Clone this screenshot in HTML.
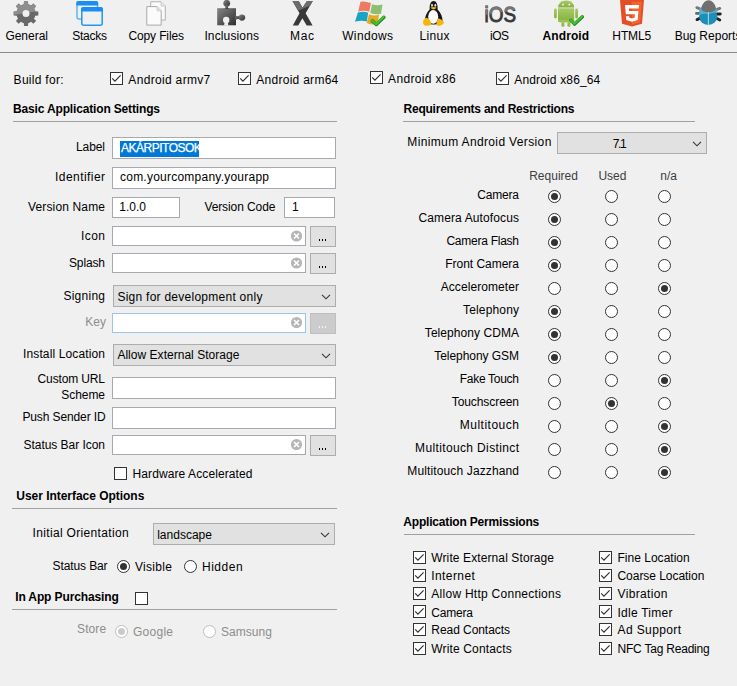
<!DOCTYPE html>
<html><head><meta charset="utf-8"><style>
html,body{margin:0;padding:0;}
body{width:737px;height:686px;background:#f0f0f0;position:relative;overflow:hidden;font-family:"Liberation Sans",sans-serif;font-size:12px;color:#000;}
.t{position:absolute;white-space:nowrap;line-height:14px;}
.b{font-weight:bold;}
.g{color:#8d8d8d;}
.h{color:#3c3c3c;}
.ab{position:absolute;}
.hr{position:absolute;height:1px;background:#a0a0a0;}
.inp{position:absolute;box-sizing:border-box;background:#fff;border:1px solid #a7a9b0;}
.sel{position:absolute;box-sizing:border-box;background:#e1e1e1;border:1px solid #adadad;}
.btn{position:absolute;box-sizing:border-box;background:#e1e1e1;border:1px solid #adadad;}
.cb{position:absolute;width:13px;height:13px;}
.rd{position:absolute;width:13px;height:13px;}
</style></head><body>
<svg class="ab" style="left:0;top:0" width="737" height="30" viewBox="0 0 737 30">
<defs>
 <clipPath id="gtop"><polygon points="0,0 60,0 60,7.5 0,17"/></clipPath>
 <linearGradient id="pz" x1="0" y1="0" x2="1" y2="1"><stop offset="0" stop-color="#858585"/><stop offset="1" stop-color="#2e2e2e"/></linearGradient>
 <clipPath id="xtop"><polygon points="280,0 320,0 320,1.5 298,10.8 280,10.8"/></clipPath>
 <linearGradient id="ios" x1="0" y1="0" x2="0.35" y2="1"><stop offset="0.45" stop-color="#6f6f6f"/><stop offset="0.5" stop-color="#3a3a3a"/></linearGradient>
 <linearGradient id="andr" x1="0" y1="0" x2="0" y2="1"><stop offset="0" stop-color="#a9c96a"/><stop offset="1" stop-color="#86b43a"/></linearGradient>
</defs>
<!-- gear -->
<g transform="translate(26,13.6)" fill="#696969"><circle r="9.6"/><path d="M-2.3 -6.5L-2 -12.3H2L2.3 -6.5Z" transform="rotate(0)"/><path d="M-2.3 -6.5L-2 -12.3H2L2.3 -6.5Z" transform="rotate(45)"/><path d="M-2.3 -6.5L-2 -12.3H2L2.3 -6.5Z" transform="rotate(90)"/><path d="M-2.3 -6.5L-2 -12.3H2L2.3 -6.5Z" transform="rotate(135)"/><path d="M-2.3 -6.5L-2 -12.3H2L2.3 -6.5Z" transform="rotate(180)"/><path d="M-2.3 -6.5L-2 -12.3H2L2.3 -6.5Z" transform="rotate(225)"/><path d="M-2.3 -6.5L-2 -12.3H2L2.3 -6.5Z" transform="rotate(270)"/><path d="M-2.3 -6.5L-2 -12.3H2L2.3 -6.5Z" transform="rotate(315)"/></g>
<g clip-path="url(#gtop)"><g transform="translate(26,13.6)" fill="#8e8e8e"><circle r="9.6"/><path d="M-2.3 -6.5L-2 -12.3H2L2.3 -6.5Z" transform="rotate(0)"/><path d="M-2.3 -6.5L-2 -12.3H2L2.3 -6.5Z" transform="rotate(45)"/><path d="M-2.3 -6.5L-2 -12.3H2L2.3 -6.5Z" transform="rotate(90)"/><path d="M-2.3 -6.5L-2 -12.3H2L2.3 -6.5Z" transform="rotate(135)"/><path d="M-2.3 -6.5L-2 -12.3H2L2.3 -6.5Z" transform="rotate(180)"/><path d="M-2.3 -6.5L-2 -12.3H2L2.3 -6.5Z" transform="rotate(225)"/><path d="M-2.3 -6.5L-2 -12.3H2L2.3 -6.5Z" transform="rotate(270)"/><path d="M-2.3 -6.5L-2 -12.3H2L2.3 -6.5Z" transform="rotate(315)"/></g></g>
<circle cx="26" cy="13.5" r="3.5" fill="#f0f0f0"/>
<!-- stacks -->
<rect x="77" y="1.7" width="20.5" height="17.3" rx="2" fill="none" stroke="#62b2f2" stroke-width="1.5"/>
<path d="M76.3 5.5V3a2 2 0 0 1 2-2H96.2a2 2 0 0 1 2 2V5.5Z" fill="#1a8ef2"/>
<rect x="81.8" y="7.9" width="20.4" height="17.3" rx="2" fill="#f0f0f0" stroke="#2196f3" stroke-width="1.5"/>
<path d="M81 11.6V9.1a2 2 0 0 1 2-2H101a2 2 0 0 1 2 2V11.6Z" fill="#1a8ef2"/>

<!-- copy files -->
<path d="M150.7 1.8H161L165.3 6.1V20.1H150.7Z" fill="#fafafa" stroke="#b0b0b0"/>
<path d="M161 1.8V6.1H165.3" fill="#e6e6e6" stroke="#c8c8c8" stroke-width="0.8"/>
<path d="M146.8 6.6H157L161.2 10.8V25.1H146.8Z" fill="#fbfbfb" stroke="#a9a9a9"/>
<path d="M157 6.6V10.8H161.2" fill="#e4e4e4" stroke="#c4c4c4" stroke-width="0.8"/>

<!-- puzzle -->
<g fill="url(#pz)">
 <rect x="217.2" y="8.2" width="18.8" height="17.1"/>
 <circle cx="226.7" cy="3.3" r="3.4"/>
 <path d="M224.6 9Q225.8 7.5 225.4 5.5H228Q227.6 7.5 228.8 9Z"/>
 <ellipse cx="241.9" cy="17.6" rx="3.3" ry="3.1"/>
 <path d="M235.5 15.3Q237 16.6 239 16.3V19Q237 18.7 235.5 20Z"/>
</g>
<circle cx="226.2" cy="20" r="3.2" fill="#f0f0f0"/>
<path d="M224.8 22H227.6L228.4 25.5H224Z" fill="#f0f0f0"/>
<!-- mac X -->
<polygon points="292.5,1 298.7,1 302.5,7.8 307,1 312.8,1 305.6,13.2 312.6,25.6 306.7,25.6 302.4,18.2 298.2,25.6 292.8,25.6 299.5,13.2" fill="#393939"/>
<polygon clip-path="url(#xtop)" points="292.5,1 298.7,1 302.5,7.8 307,1 312.8,1 305.6,13.2 312.6,25.6 306.7,25.6 302.4,18.2 298.2,25.6 292.8,25.6 299.5,13.2" fill="#6c6c6c"/>

<!-- windows -->
<path d="M360.5 1.8Q365 0.8 370.9 3L369.3 11.8Q364 9.6 358.2 11.6Z" fill="#ec7a63"/>
<path d="M372 4.2Q377 6 382.5 4.6L381 13.8Q375.5 15.2 370.3 13Z" fill="#8bc16e"/>
<path d="M357.9 12.6Q363.4 10.6 368.2 12.8L366.8 21.6Q361.5 19.6 355 21.8Z" fill="#17a4c5"/>
<path d="M369 14.2Q374 16.3 379 14.8L377.6 23.8Q372.3 25.6 366.8 23Z" fill="#e9a824"/>
<path d="M372.3 20.8L376.3 24.5L383.9 17.2" fill="none" stroke="#2a7a20" stroke-width="3.4" stroke-linecap="round" stroke-linejoin="round"/>
<path d="M372.1 20.5L376.1 24.1L383.6 16.9" fill="none" stroke="#3cc52e" stroke-width="2.2" stroke-linecap="round" stroke-linejoin="round"/>

<!-- tux -->
<path d="M429.6 9.5Q429.3 1 433.6 1Q437.9 1 437.6 9.5Q442.6 14.5 442.6 21.5Q442 24.5 433.6 24.5Q425.2 24.5 424.8 21.5Q424.8 14.5 429.6 9.5Z" fill="#161616"/>
<ellipse cx="433.2" cy="16.8" rx="5" ry="6.9" fill="#fff"/>
<ellipse cx="432" cy="5.2" rx="1" ry="1.5" fill="#d8d8d8"/>
<ellipse cx="435.3" cy="5.2" rx="1" ry="1.5" fill="#d8d8d8"/>
<path d="M430.4 7.6Q433.5 6.3 436.6 7.6Q434.8 9.6 433.5 9.6Q432.2 9.6 430.4 7.6Z" fill="#f4b40f"/>
<path d="M423 22Q423.4 18.5 427 17.8Q430.8 20 431.5 24.3Q429.5 26.2 425.5 25.8Q422.8 24.8 423 22Z" fill="#f7b60d"/>
<path d="M436.4 24.6Q436.4 20 438.4 18.2Q442 19.3 444.2 22.5Q443 25.2 439 26Q436.6 26 436.4 24.6Z" fill="#f7b60d"/>
<!-- iOS -->
<clipPath id="iostop"><polygon points="480,0 520,0 520,9 480,16"/></clipPath>
<text x="484.6" y="21.7" font-family="Liberation Sans" font-size="22.8" fill="#383838" stroke="#383838" stroke-width="0.9" textLength="31.5" lengthAdjust="spacingAndGlyphs">iOS</text>
<text clip-path="url(#iostop)" x="484.6" y="21.7" font-family="Liberation Sans" font-size="22.8" fill="#777" stroke="#777" stroke-width="0.9" textLength="31.5" lengthAdjust="spacingAndGlyphs">iOS</text>
<!-- android -->
<g fill="url(#andr)">
 <path d="M558 7.4A8.1 7 0 0 1 574.2 7.4Z"/>
 <rect x="558" y="8.3" width="16.2" height="12.6" rx="0"/>
 <path d="M558 20.5H574.2V20.8Q574.2 22.2 572.8 22.2H559.4Q558 22.2 558 20.8Z"/>
 <rect x="554" y="8.6" width="2.8" height="9.9" rx="1.4"/>
 <rect x="575.2" y="8.6" width="2.8" height="9.9" rx="1.4"/>
 <rect x="561.4" y="21" width="3" height="5.8" rx="1.4"/>
 <rect x="567.4" y="21" width="3" height="5.8" rx="1.4"/>
</g>
<path d="M561 1L562.5 3.2M571.3 1L569.8 3.2" stroke="#a9c96a" stroke-width="0.8"/>
<circle cx="563.1" cy="4.6" r="0.9" fill="#fff"/>
<circle cx="569.3" cy="4.6" r="0.9" fill="#fff"/>
<path d="M570.8 20.4L574.6 24.1L582.4 16.8" fill="none" stroke="#2a7a20" stroke-width="3.4" stroke-linecap="round" stroke-linejoin="round"/>
<path d="M570.6 20.1L574.4 23.7L582.1 16.5" fill="none" stroke="#3cc52e" stroke-width="2.2" stroke-linecap="round" stroke-linejoin="round"/>

<!-- html5 -->
<path d="M620 0H644L642 23.8L632 26.6L622 23.8Z" fill="#e34f26"/>
<path d="M632 1.8H641.8L640.2 22.2L632 24.6Z" fill="#f06529"/>
<path d="M625 5H639L638.7 8.6H628.8L629 11H638.4L637.7 20L632 21.8L626.2 20L626 16.2H629.2L629.4 17.8L632 18.5L634.6 17.8L634.9 14.3H625.8Z" fill="#fff"/>

<!-- bug -->
<g stroke-width="2.8" stroke-linecap="round">
 <path d="M696.8 7.6L699.5 8.6" stroke="#777"/>
 <path d="M696.5 13.4H699.5" stroke="#666"/>
 <path d="M697 19.6L699.8 18.4" stroke="#222"/>
 <path d="M719.8 8.4L717 9.4" stroke="#777"/>
 <path d="M720.3 14H717.3" stroke="#222"/>
 <path d="M719.8 20L717 18.6" stroke="#222"/>
</g>
<ellipse cx="708.2" cy="16.6" rx="9.1" ry="8.5" fill="#1b8fb8"/>
<path d="M699.2 15.2Q703 13.2 708 14Q713 13.2 717.2 12V10A9 4 0 0 0 699.2 10Z" fill="#52b0d2"/>
<path d="M701.2 8Q703.5 0.2 708.6 0.2Q713.7 0.2 716 8Q716.4 9.6 714 11Q711 12.6 708.6 12.3Q706 12.6 703 11Q700.8 9.6 701.2 8Z" fill="#6f6f6f"/>
<rect x="707.9" y="12.3" width="0.8" height="12.8" fill="#d8eef5"/>
</svg>

<div class="hr" style="left:0;top:52px;width:737px;background:#8a8a8a"></div>
<div class="hr" style="left:13px;top:121px;width:324px"></div>
<div class="hr" style="left:403px;top:121px;width:292px"></div>
<div class="hr" style="left:12px;top:508px;width:325px"></div>
<div class="hr" style="left:12px;top:609px;width:325px"></div>
<div class="hr" style="left:404px;top:534px;width:291px"></div>
<svg class="cb" style="left:110px;top:72px" width="13" height="13" viewBox="0 0 13 13"><rect x="0.5" y="0.5" width="12" height="12" fill="#fff" stroke="#333"/><path d="M2.2 6.4L4.9 9.1L10.6 3.4" fill="none" stroke="#333" stroke-width="1.2"/></svg>
<svg class="cb" style="left:238px;top:72px" width="13" height="13" viewBox="0 0 13 13"><rect x="0.5" y="0.5" width="12" height="12" fill="#fff" stroke="#333"/><path d="M2.2 6.4L4.9 9.1L10.6 3.4" fill="none" stroke="#333" stroke-width="1.2"/></svg>
<svg class="cb" style="left:370px;top:71px" width="13" height="13" viewBox="0 0 13 13"><rect x="0.5" y="0.5" width="12" height="12" fill="#fff" stroke="#333"/><path d="M2.2 6.4L4.9 9.1L10.6 3.4" fill="none" stroke="#333" stroke-width="1.2"/></svg>
<svg class="cb" style="left:496px;top:72px" width="13" height="13" viewBox="0 0 13 13"><rect x="0.5" y="0.5" width="12" height="12" fill="#fff" stroke="#333"/><path d="M2.2 6.4L4.9 9.1L10.6 3.4" fill="none" stroke="#333" stroke-width="1.2"/></svg>
<div class="inp" style="left:112px;top:137px;width:224px;height:22px;"></div>
<div class="ab" style="left:120px;top:141px;width:79px;height:16px;background:#0078d7"></div>
<div class="inp" style="left:112px;top:167px;width:224px;height:22px;"></div>
<div class="inp" style="left:112px;top:197px;width:68px;height:21px;"></div>
<div class="inp" style="left:284px;top:197px;width:51px;height:21px;"></div>
<div class="inp" style="left:112px;top:226px;width:194px;height:20px;"></div>
<svg class="ab" style="left:290px;top:230px" width="12" height="12" viewBox="0 0 12 12"><circle cx="6.5" cy="6" r="5.6" fill="#b6b6b6"/><path d="M4.0 3.5L9.0 8.5M9.0 3.5L4.0 8.5" stroke="#fff" stroke-width="1.6"/></svg>
<div class="btn" style="left:310px;top:226px;width:26px;height:21px"></div><div class="ab" style="left:319px;top:239px;width:1px;height:2px;background:#000"></div><div class="ab" style="left:322px;top:239px;width:1px;height:2px;background:#000"></div><div class="ab" style="left:325px;top:239px;width:1px;height:2px;background:#000"></div>
<div class="inp" style="left:112px;top:253px;width:194px;height:20px;"></div>
<svg class="ab" style="left:290px;top:257px" width="12" height="12" viewBox="0 0 12 12"><circle cx="6.5" cy="6" r="5.6" fill="#b6b6b6"/><path d="M4.0 3.5L9.0 8.5M9.0 3.5L4.0 8.5" stroke="#fff" stroke-width="1.6"/></svg>
<div class="btn" style="left:310px;top:253px;width:26px;height:21px"></div><div class="ab" style="left:319px;top:266px;width:1px;height:2px;background:#000"></div><div class="ab" style="left:322px;top:266px;width:1px;height:2px;background:#000"></div><div class="ab" style="left:325px;top:266px;width:1px;height:2px;background:#000"></div>
<div class="sel" style="left:113px;top:285px;width:223px;height:22px"></div><svg class="ab" style="left:321px;top:294px" width="10" height="6" viewBox="0 0 10 6"><path d="M1 0.8L5 4.8L9 0.8" fill="none" stroke="#333" stroke-width="1.1"/></svg>
<div class="inp" style="left:112px;top:313px;width:194px;height:20px;border-color:#99c4ee"></div>
<svg class="ab" style="left:290px;top:316px" width="12" height="12" viewBox="0 0 12 12"><circle cx="6.5" cy="6.5" r="5.6" fill="#b6b6b6"/><path d="M4.0 4.0L9.0 9.0M9.0 4.0L4.0 9.0" stroke="#fff" stroke-width="1.6"/></svg>
<div class="btn" style="left:310px;top:313px;width:26px;height:21px;background:#cccccc;border-color:#bfbfbf"></div><div class="ab" style="left:319px;top:326px;width:1px;height:2px;background:#f4f4f4"></div><div class="ab" style="left:322px;top:326px;width:1px;height:2px;background:#f4f4f4"></div><div class="ab" style="left:325px;top:326px;width:1px;height:2px;background:#f4f4f4"></div>
<div class="sel" style="left:113px;top:344px;width:223px;height:22px"></div><svg class="ab" style="left:321px;top:353px" width="10" height="6" viewBox="0 0 10 6"><path d="M1 0.8L5 4.8L9 0.8" fill="none" stroke="#333" stroke-width="1.1"/></svg>
<div class="inp" style="left:112px;top:377px;width:224px;height:22px;"></div>
<div class="inp" style="left:112px;top:407px;width:224px;height:22px;"></div>
<div class="inp" style="left:112px;top:435px;width:194px;height:20px;"></div>
<svg class="ab" style="left:290px;top:438px" width="12" height="12" viewBox="0 0 12 12"><circle cx="6.5" cy="6.5" r="5.6" fill="#b6b6b6"/><path d="M4.0 4.0L9.0 9.0M9.0 4.0L4.0 9.0" stroke="#fff" stroke-width="1.6"/></svg>
<div class="btn" style="left:310px;top:435px;width:26px;height:21px"></div><div class="ab" style="left:319px;top:448px;width:1px;height:2px;background:#000"></div><div class="ab" style="left:322px;top:448px;width:1px;height:2px;background:#000"></div><div class="ab" style="left:325px;top:448px;width:1px;height:2px;background:#000"></div>
<svg class="cb" style="left:114px;top:467px" width="13" height="13" viewBox="0 0 13 13"><rect x="0.5" y="0.5" width="12" height="12" fill="#fff" stroke="#333"/></svg>
<div class="sel" style="left:153px;top:523px;width:182px;height:22px"></div><svg class="ab" style="left:320px;top:532px" width="10" height="6" viewBox="0 0 10 6"><path d="M1 0.8L5 4.8L9 0.8" fill="none" stroke="#333" stroke-width="1.1"/></svg>
<svg class="rd" style="left:117px;top:560px" width="13" height="13" viewBox="0 0 13 13"><circle cx="6.5" cy="6.5" r="6" fill="#fff" stroke="#333"/><circle cx="6.5" cy="6.5" r="3.5" fill="#333"/></svg>
<svg class="rd" style="left:184px;top:560px" width="13" height="13" viewBox="0 0 13 13"><circle cx="6.5" cy="6.5" r="6" fill="#fff" stroke="#333"/></svg>
<svg class="cb" style="left:135px;top:592px" width="13" height="13" viewBox="0 0 13 13"><rect x="0.5" y="0.5" width="12" height="12" fill="#fff" stroke="#333"/></svg>
<svg class="rd" style="left:115px;top:625px" width="13" height="13" viewBox="0 0 13 13"><circle cx="6.5" cy="6.5" r="6" fill="#fff" stroke="#bdbdbd"/><circle cx="6.5" cy="6.5" r="3.5" fill="#cacaca"/></svg>
<svg class="rd" style="left:203px;top:625px" width="13" height="13" viewBox="0 0 13 13"><circle cx="6.5" cy="6.5" r="6" fill="#fff" stroke="#bdbdbd"/></svg>
<div class="sel" style="left:557px;top:132px;width:150px;height:22px"></div><svg class="ab" style="left:692px;top:141px" width="10" height="6" viewBox="0 0 10 6"><path d="M1 0.8L5 4.8L9 0.8" fill="none" stroke="#333" stroke-width="1.1"/></svg>
<svg class="rd" style="left:548px;top:190px" width="13" height="13" viewBox="0 0 13 13"><circle cx="6.5" cy="6.5" r="6" fill="#fff" stroke="#333"/><circle cx="6.5" cy="6.5" r="3.5" fill="#333"/></svg>
<svg class="rd" style="left:605px;top:190px" width="13" height="13" viewBox="0 0 13 13"><circle cx="6.5" cy="6.5" r="6" fill="#fff" stroke="#333"/></svg>
<svg class="rd" style="left:658px;top:190px" width="13" height="13" viewBox="0 0 13 13"><circle cx="6.5" cy="6.5" r="6" fill="#fff" stroke="#333"/></svg>
<svg class="rd" style="left:548px;top:213px" width="13" height="13" viewBox="0 0 13 13"><circle cx="6.5" cy="6.5" r="6" fill="#fff" stroke="#333"/><circle cx="6.5" cy="6.5" r="3.5" fill="#333"/></svg>
<svg class="rd" style="left:605px;top:213px" width="13" height="13" viewBox="0 0 13 13"><circle cx="6.5" cy="6.5" r="6" fill="#fff" stroke="#333"/></svg>
<svg class="rd" style="left:658px;top:213px" width="13" height="13" viewBox="0 0 13 13"><circle cx="6.5" cy="6.5" r="6" fill="#fff" stroke="#333"/></svg>
<svg class="rd" style="left:548px;top:236px" width="13" height="13" viewBox="0 0 13 13"><circle cx="6.5" cy="6.5" r="6" fill="#fff" stroke="#333"/><circle cx="6.5" cy="6.5" r="3.5" fill="#333"/></svg>
<svg class="rd" style="left:605px;top:236px" width="13" height="13" viewBox="0 0 13 13"><circle cx="6.5" cy="6.5" r="6" fill="#fff" stroke="#333"/></svg>
<svg class="rd" style="left:658px;top:236px" width="13" height="13" viewBox="0 0 13 13"><circle cx="6.5" cy="6.5" r="6" fill="#fff" stroke="#333"/></svg>
<svg class="rd" style="left:548px;top:259px" width="13" height="13" viewBox="0 0 13 13"><circle cx="6.5" cy="6.5" r="6" fill="#fff" stroke="#333"/><circle cx="6.5" cy="6.5" r="3.5" fill="#333"/></svg>
<svg class="rd" style="left:605px;top:259px" width="13" height="13" viewBox="0 0 13 13"><circle cx="6.5" cy="6.5" r="6" fill="#fff" stroke="#333"/></svg>
<svg class="rd" style="left:658px;top:259px" width="13" height="13" viewBox="0 0 13 13"><circle cx="6.5" cy="6.5" r="6" fill="#fff" stroke="#333"/></svg>
<svg class="rd" style="left:548px;top:282px" width="13" height="13" viewBox="0 0 13 13"><circle cx="6.5" cy="6.5" r="6" fill="#fff" stroke="#333"/></svg>
<svg class="rd" style="left:605px;top:282px" width="13" height="13" viewBox="0 0 13 13"><circle cx="6.5" cy="6.5" r="6" fill="#fff" stroke="#333"/></svg>
<svg class="rd" style="left:658px;top:282px" width="13" height="13" viewBox="0 0 13 13"><circle cx="6.5" cy="6.5" r="6" fill="#fff" stroke="#333"/><circle cx="6.5" cy="6.5" r="3.5" fill="#333"/></svg>
<svg class="rd" style="left:548px;top:305px" width="13" height="13" viewBox="0 0 13 13"><circle cx="6.5" cy="6.5" r="6" fill="#fff" stroke="#333"/><circle cx="6.5" cy="6.5" r="3.5" fill="#333"/></svg>
<svg class="rd" style="left:605px;top:305px" width="13" height="13" viewBox="0 0 13 13"><circle cx="6.5" cy="6.5" r="6" fill="#fff" stroke="#333"/></svg>
<svg class="rd" style="left:658px;top:305px" width="13" height="13" viewBox="0 0 13 13"><circle cx="6.5" cy="6.5" r="6" fill="#fff" stroke="#333"/></svg>
<svg class="rd" style="left:548px;top:328px" width="13" height="13" viewBox="0 0 13 13"><circle cx="6.5" cy="6.5" r="6" fill="#fff" stroke="#333"/><circle cx="6.5" cy="6.5" r="3.5" fill="#333"/></svg>
<svg class="rd" style="left:605px;top:328px" width="13" height="13" viewBox="0 0 13 13"><circle cx="6.5" cy="6.5" r="6" fill="#fff" stroke="#333"/></svg>
<svg class="rd" style="left:658px;top:328px" width="13" height="13" viewBox="0 0 13 13"><circle cx="6.5" cy="6.5" r="6" fill="#fff" stroke="#333"/></svg>
<svg class="rd" style="left:548px;top:351px" width="13" height="13" viewBox="0 0 13 13"><circle cx="6.5" cy="6.5" r="6" fill="#fff" stroke="#333"/><circle cx="6.5" cy="6.5" r="3.5" fill="#333"/></svg>
<svg class="rd" style="left:605px;top:351px" width="13" height="13" viewBox="0 0 13 13"><circle cx="6.5" cy="6.5" r="6" fill="#fff" stroke="#333"/></svg>
<svg class="rd" style="left:658px;top:351px" width="13" height="13" viewBox="0 0 13 13"><circle cx="6.5" cy="6.5" r="6" fill="#fff" stroke="#333"/></svg>
<svg class="rd" style="left:548px;top:374px" width="13" height="13" viewBox="0 0 13 13"><circle cx="6.5" cy="6.5" r="6" fill="#fff" stroke="#333"/></svg>
<svg class="rd" style="left:605px;top:374px" width="13" height="13" viewBox="0 0 13 13"><circle cx="6.5" cy="6.5" r="6" fill="#fff" stroke="#333"/></svg>
<svg class="rd" style="left:658px;top:374px" width="13" height="13" viewBox="0 0 13 13"><circle cx="6.5" cy="6.5" r="6" fill="#fff" stroke="#333"/><circle cx="6.5" cy="6.5" r="3.5" fill="#333"/></svg>
<svg class="rd" style="left:548px;top:397px" width="13" height="13" viewBox="0 0 13 13"><circle cx="6.5" cy="6.5" r="6" fill="#fff" stroke="#333"/></svg>
<svg class="rd" style="left:605px;top:397px" width="13" height="13" viewBox="0 0 13 13"><circle cx="6.5" cy="6.5" r="6" fill="#fff" stroke="#333"/><circle cx="6.5" cy="6.5" r="3.5" fill="#333"/></svg>
<svg class="rd" style="left:658px;top:397px" width="13" height="13" viewBox="0 0 13 13"><circle cx="6.5" cy="6.5" r="6" fill="#fff" stroke="#333"/></svg>
<svg class="rd" style="left:548px;top:420px" width="13" height="13" viewBox="0 0 13 13"><circle cx="6.5" cy="6.5" r="6" fill="#fff" stroke="#333"/></svg>
<svg class="rd" style="left:605px;top:420px" width="13" height="13" viewBox="0 0 13 13"><circle cx="6.5" cy="6.5" r="6" fill="#fff" stroke="#333"/></svg>
<svg class="rd" style="left:658px;top:420px" width="13" height="13" viewBox="0 0 13 13"><circle cx="6.5" cy="6.5" r="6" fill="#fff" stroke="#333"/><circle cx="6.5" cy="6.5" r="3.5" fill="#333"/></svg>
<svg class="rd" style="left:548px;top:443px" width="13" height="13" viewBox="0 0 13 13"><circle cx="6.5" cy="6.5" r="6" fill="#fff" stroke="#333"/></svg>
<svg class="rd" style="left:605px;top:443px" width="13" height="13" viewBox="0 0 13 13"><circle cx="6.5" cy="6.5" r="6" fill="#fff" stroke="#333"/></svg>
<svg class="rd" style="left:658px;top:443px" width="13" height="13" viewBox="0 0 13 13"><circle cx="6.5" cy="6.5" r="6" fill="#fff" stroke="#333"/><circle cx="6.5" cy="6.5" r="3.5" fill="#333"/></svg>
<svg class="rd" style="left:548px;top:466px" width="13" height="13" viewBox="0 0 13 13"><circle cx="6.5" cy="6.5" r="6" fill="#fff" stroke="#333"/></svg>
<svg class="rd" style="left:605px;top:466px" width="13" height="13" viewBox="0 0 13 13"><circle cx="6.5" cy="6.5" r="6" fill="#fff" stroke="#333"/></svg>
<svg class="rd" style="left:658px;top:466px" width="13" height="13" viewBox="0 0 13 13"><circle cx="6.5" cy="6.5" r="6" fill="#fff" stroke="#333"/><circle cx="6.5" cy="6.5" r="3.5" fill="#333"/></svg>
<svg class="cb" style="left:413px;top:551px" width="13" height="13" viewBox="0 0 13 13"><rect x="0.5" y="0.5" width="12" height="12" fill="#fff" stroke="#333"/><path d="M2.2 6.4L4.9 9.1L10.6 3.4" fill="none" stroke="#333" stroke-width="1.2"/></svg>
<svg class="cb" style="left:599px;top:551px" width="13" height="13" viewBox="0 0 13 13"><rect x="0.5" y="0.5" width="12" height="12" fill="#fff" stroke="#333"/><path d="M2.2 6.4L4.9 9.1L10.6 3.4" fill="none" stroke="#333" stroke-width="1.2"/></svg>
<svg class="cb" style="left:413px;top:569px" width="13" height="13" viewBox="0 0 13 13"><rect x="0.5" y="0.5" width="12" height="12" fill="#fff" stroke="#333"/><path d="M2.2 6.4L4.9 9.1L10.6 3.4" fill="none" stroke="#333" stroke-width="1.2"/></svg>
<svg class="cb" style="left:599px;top:569px" width="13" height="13" viewBox="0 0 13 13"><rect x="0.5" y="0.5" width="12" height="12" fill="#fff" stroke="#333"/><path d="M2.2 6.4L4.9 9.1L10.6 3.4" fill="none" stroke="#333" stroke-width="1.2"/></svg>
<svg class="cb" style="left:413px;top:587px" width="13" height="13" viewBox="0 0 13 13"><rect x="0.5" y="0.5" width="12" height="12" fill="#fff" stroke="#333"/><path d="M2.2 6.4L4.9 9.1L10.6 3.4" fill="none" stroke="#333" stroke-width="1.2"/></svg>
<svg class="cb" style="left:599px;top:587px" width="13" height="13" viewBox="0 0 13 13"><rect x="0.5" y="0.5" width="12" height="12" fill="#fff" stroke="#333"/><path d="M2.2 6.4L4.9 9.1L10.6 3.4" fill="none" stroke="#333" stroke-width="1.2"/></svg>
<svg class="cb" style="left:413px;top:605px" width="13" height="13" viewBox="0 0 13 13"><rect x="0.5" y="0.5" width="12" height="12" fill="#fff" stroke="#333"/><path d="M2.2 6.4L4.9 9.1L10.6 3.4" fill="none" stroke="#333" stroke-width="1.2"/></svg>
<svg class="cb" style="left:599px;top:605px" width="13" height="13" viewBox="0 0 13 13"><rect x="0.5" y="0.5" width="12" height="12" fill="#fff" stroke="#333"/><path d="M2.2 6.4L4.9 9.1L10.6 3.4" fill="none" stroke="#333" stroke-width="1.2"/></svg>
<svg class="cb" style="left:413px;top:623px" width="13" height="13" viewBox="0 0 13 13"><rect x="0.5" y="0.5" width="12" height="12" fill="#fff" stroke="#333"/><path d="M2.2 6.4L4.9 9.1L10.6 3.4" fill="none" stroke="#333" stroke-width="1.2"/></svg>
<svg class="cb" style="left:599px;top:623px" width="13" height="13" viewBox="0 0 13 13"><rect x="0.5" y="0.5" width="12" height="12" fill="#fff" stroke="#333"/><path d="M2.2 6.4L4.9 9.1L10.6 3.4" fill="none" stroke="#333" stroke-width="1.2"/></svg>
<svg class="cb" style="left:413px;top:642px" width="13" height="13" viewBox="0 0 13 13"><rect x="0.5" y="0.5" width="12" height="12" fill="#fff" stroke="#333"/><path d="M2.2 6.4L4.9 9.1L10.6 3.4" fill="none" stroke="#333" stroke-width="1.2"/></svg>
<svg class="cb" style="left:599px;top:642px" width="13" height="13" viewBox="0 0 13 13"><rect x="0.5" y="0.5" width="12" height="12" fill="#fff" stroke="#333"/><path d="M2.2 6.4L4.9 9.1L10.6 3.4" fill="none" stroke="#333" stroke-width="1.2"/></svg>
<div class="t" style="left:121px;top:141px;color:#fff;letter-spacing:-0.5px;-webkit-text-stroke:0.25px #fff">AKÁRPITOSOK</div>
<div class="t" id="x0" style="top:29px;left:5.4px;letter-spacing:-0.017px;">General</div>
<div class="t" id="x1" style="top:29px;left:72.3px;letter-spacing:-0.263px;">Stacks</div>
<div class="t" id="x2" style="top:29px;left:128.4px;letter-spacing:-0.121px;">Copy Files</div>
<div class="t" id="x3" style="top:29px;left:204.4px;letter-spacing:0.136px;">Inclusions</div>
<div class="t" id="x4" style="top:29px;left:290.1px;letter-spacing:0.564px;">Mac</div>
<div class="t" id="x5" style="top:29px;left:342.2px;letter-spacing:0.352px;">Windows</div>
<div class="t" id="x6" style="top:29px;left:419.5px;letter-spacing:0.303px;">Linux</div>
<div class="t" id="x7" style="top:29px;left:490px;letter-spacing:-0.508px;">iOS</div>
<div class="t b" id="x8" style="top:29px;left:542.6px;letter-spacing:0.083px;">Android</div>
<div class="t" id="x9" style="top:29px;left:612.3px;letter-spacing:-0.086px;">HTML5</div>
<div class="t" id="x10" style="top:29px;left:674.7px;">Bug Reports</div>
<div class="t" id="x11" style="top:73px;left:13.6px;letter-spacing:0.293px;">Build for:</div>
<div class="t" id="x12" style="top:73px;left:128.3px;letter-spacing:0.329px;">Android armv7</div>
<div class="t" id="x13" style="top:73px;left:256.3px;letter-spacing:0.273px;">Android arm64</div>
<div class="t" id="x14" style="top:72px;left:388.1px;letter-spacing:0.345px;">Android x86</div>
<div class="t" id="x15" style="top:73px;left:514.3px;letter-spacing:0.148px;">Android x86_64</div>
<div class="t b" id="x16" style="top:102px;left:13px;letter-spacing:-0.157px;">Basic Application Settings</div>
<div class="t b" id="x17" style="top:102px;left:403.5px;letter-spacing:-0.228px;">Requirements and Restrictions</div>
<div class="t" id="x18" style="top:140px;right:632.094px;letter-spacing:-0.094px;">Label</div>
<div class="t" id="x19" style="top:170px;right:631.559px;letter-spacing:0.441px;">Identifier</div>
<div class="t" id="x20" style="top:200px;right:631.852px;letter-spacing:0.148px;">Version Name</div>
<div class="t" id="x21" style="top:200px;left:204.4px;letter-spacing:-0.095px;">Version Code</div>
<div class="t" id="x22" style="top:229px;right:631.562px;letter-spacing:0.438px;">Icon</div>
<div class="t" id="x23" style="top:256px;right:632.141px;letter-spacing:-0.141px;">Splash</div>
<div class="t" id="x24" style="top:289px;right:631.739px;letter-spacing:0.261px;">Signing</div>
<div class="t g" id="x25" style="top:315px;right:630.994px;letter-spacing:0.006px;">Key</div>
<div class="t" id="x26" style="top:347px;right:631.871px;letter-spacing:0.129px;">Install Location</div>
<div class="t" id="x27" style="top:372px;right:632.143px;letter-spacing:-0.143px;">Custom URL</div>
<div class="t" id="x28" style="top:388px;right:632.066px;letter-spacing:-0.066px;">Scheme</div>
<div class="t" id="x29" style="top:410px;right:631.409px;letter-spacing:-0.109px;">Push Sender ID</div>
<div class="t" id="x30" style="top:438px;right:632.039px;letter-spacing:-0.039px;">Status Bar Icon</div>
<div class="t" id="x31" style="top:467px;left:132.5px;letter-spacing:0.102px;">Hardware Accelerated</div>
<div class="t b" id="x32" style="top:489px;left:16.3px;letter-spacing:-0.033px;">User Interface Options</div>
<div class="t" id="x33" style="top:526px;left:32.6px;letter-spacing:0.331px;">Initial Orientation</div>
<div class="t" id="x34" style="top:559px;left:52.6px;letter-spacing:-0.115px;">Status Bar</div>
<div class="t" id="x35" style="top:560px;left:134.9px;letter-spacing:0.310px;">Visible</div>
<div class="t" id="x36" style="top:560px;left:202px;letter-spacing:0.514px;">Hidden</div>
<div class="t b" id="x37" style="top:590px;left:15.2px;letter-spacing:-0.123px;">In App Purchasing</div>
<div class="t g" id="x38" style="top:622px;left:77.1px;letter-spacing:0.078px;">Store</div>
<div class="t g" id="x39" style="top:625px;left:133px;letter-spacing:0.259px;">Google</div>
<div class="t g" id="x40" style="top:625px;left:221px;letter-spacing:0.049px;">Samsung</div>
<div class="t" id="x41" style="top:170px;left:120px;letter-spacing:0.234px;">com.yourcompany.yourapp</div>
<div class="t" id="x42" style="top:200px;left:119.3px;">1.0.0</div>
<div class="t" id="x43" style="top:200px;left:292px;">1</div>
<div class="t" id="x44" style="top:290px;left:117.4px;letter-spacing:0.260px;">Sign for development only</div>
<div class="t" id="x45" style="top:348px;left:117.4px;letter-spacing:0.028px;">Allow External Storage</div>
<div class="t" id="x46" style="top:528px;left:157.2px;">landscape</div>
<div class="t" id="x47" style="top:135px;left:407.3px;letter-spacing:0.361px;">Minimum Android Version</div>
<div class="t" id="x48" style="top:137px;left:612.7px;letter-spacing:-1.344px;">7.1</div>
<div class="t h" id="x49" style="top:169px;left:529.2px;">Required</div>
<div class="t h" id="x50" style="top:169px;left:598.4px;">Used</div>
<div class="t h" id="x51" style="top:169px;left:660.3px;">n/a</div>
<div class="t" id="x52" style="top:188px;right:218.178px;letter-spacing:-0.178px;">Camera</div>
<div class="t" id="x53" style="top:211px;right:217.881px;letter-spacing:0.119px;">Camera Autofocus</div>
<div class="t" id="x54" style="top:234px;right:218.251px;letter-spacing:-0.251px;">Camera Flash</div>
<div class="t" id="x55" style="top:257px;right:218.030px;letter-spacing:-0.030px;">Front Camera</div>
<div class="t" id="x56" style="top:280px;right:217.915px;letter-spacing:0.085px;">Accelerometer</div>
<div class="t" id="x57" style="top:303px;right:217.840px;letter-spacing:0.160px;">Telephony</div>
<div class="t" id="x58" style="top:326px;right:217.937px;letter-spacing:0.063px;">Telephony CDMA</div>
<div class="t" id="x59" style="top:349px;right:218.049px;letter-spacing:-0.049px;">Telephony GSM</div>
<div class="t" id="x60" style="top:372px;right:218.281px;letter-spacing:-0.281px;">Fake Touch</div>
<div class="t" id="x61" style="top:395px;right:218.075px;letter-spacing:-0.075px;">Touchscreen</div>
<div class="t" id="x62" style="top:418px;right:217.489px;letter-spacing:0.511px;">Multitouch</div>
<div class="t" id="x63" style="top:441px;right:217.632px;letter-spacing:0.368px;">Multitouch Distinct</div>
<div class="t" id="x64" style="top:464px;right:217.873px;letter-spacing:0.127px;">Multitouch Jazzhand</div>
<div class="t b" id="x65" style="top:515px;left:403.3px;letter-spacing:-0.184px;">Application Permissions</div>
<div class="t" id="x66" style="top:551px;left:431.3px;letter-spacing:0.105px;">Write External Storage</div>
<div class="t" id="x67" style="top:551px;left:617.5px;letter-spacing:0.013px;">Fine Location</div>
<div class="t" id="x68" style="top:569px;left:431.3px;letter-spacing:0.400px;">Internet</div>
<div class="t" id="x69" style="top:569px;left:617.5px;letter-spacing:-0.042px;">Coarse Location</div>
<div class="t" id="x70" style="top:587px;left:431.3px;letter-spacing:0.268px;">Allow Http Connections</div>
<div class="t" id="x71" style="top:587px;left:617.5px;letter-spacing:0.343px;">Vibration</div>
<div class="t" id="x72" style="top:606px;left:431.3px;letter-spacing:-0.197px;">Camera</div>
<div class="t" id="x73" style="top:606px;left:617.5px;letter-spacing:0.246px;">Idle Timer</div>
<div class="t" id="x74" style="top:623px;left:431.3px;letter-spacing:-0.058px;">Read Contacts</div>
<div class="t" id="x75" style="top:623px;left:617.5px;letter-spacing:0.395px;">Ad Support</div>
<div class="t" id="x76" style="top:642px;left:431.3px;letter-spacing:0.149px;">Write Contacts</div>
<div class="t" id="x77" style="top:642px;left:617.5px;letter-spacing:-0.212px;">NFC Tag Reading</div>
</body></html>
